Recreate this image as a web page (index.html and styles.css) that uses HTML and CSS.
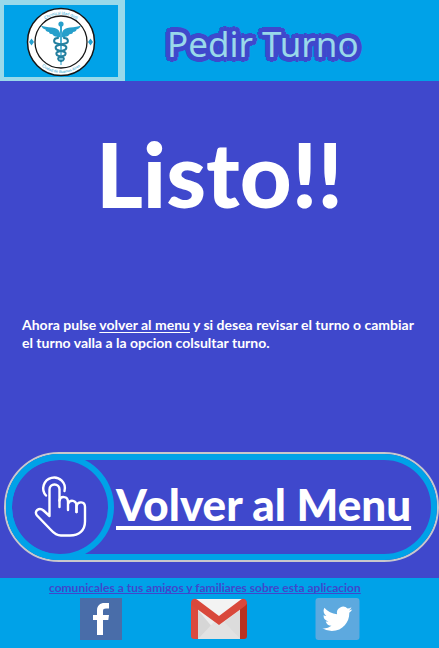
FILE: index.html
```html
<!DOCTYPE html>
<html lang="es">
<head>
<meta charset="utf-8">
<meta name="viewport" content="width=device-width, initial-scale=1">
<title>Pedir Turno</title>
<link rel="stylesheet" href="styles.css">
</head>
<body>
<header class="top">
  <div class="logo">
    <svg class="seal" viewBox="0 0 70 70" aria-hidden="true">
      <defs>
        <path id="arc-top" d="M7.500 35a27.500 27.500 0 0 1 55 0"/>
        <path id="arc-bottom" d="M4 35a31 31 0 0 0 62 0"/>
      </defs>
      <circle cx="35" cy="35" r="33.500" fill="#fff" stroke="#161616" stroke-width="1.500"/>
      <circle cx="35" cy="35" r="26" fill="#fff" stroke="#161616" stroke-width="1.300"/>
      <text class="seal-text"><textPath href="#arc-top" startOffset="50%">Chemical (dad dad)</textPath></text>
      <text class="seal-text"><textPath href="#arc-bottom" startOffset="50%">Ciudad de Buenos Aires</textPath></text>
      <path d="M5.500 31.500 8 35l-2.500 3.500L3 35zM64.500 31.500 67 35l-2.500 3.500L62 35z" fill="#24a0d0"/>
      <g fill="#269fcb">
        <path d="M34 26c-1-4-4-5-8-5.500-5-.4-8-.9-11-2 1 2.500 2.500 3.500 4.500 4 0 1.500 1.500 2.300 3.500 2.500 0 1.500 1.500 2.200 3.500 2.200.5 1.600 2.500 2.300 4 2.300.5 1.500 2 1.500 3.500.5zM36 26c1-4 4-5 8-5.500 5-.4 8-.9 11-2-1 2.500-2.500 3.500-4.500 4 0 1.500-1.500 2.300-3.500 2.500 0 1.500-1.500 2.200-3.500 2.200-.5 1.600-2.500 2.300-4 2.300-.5 1.500-2 1.500-3.500.5z"/>
        <circle cx="35" cy="17" r="2.600"/>
        <path d="M34 18h2l-.5 40h-1z"/>
      </g>
      <g fill="none" stroke="#237f9f" stroke-width="2" stroke-linecap="round">
        <path d="M32 31c-5 0-5 5-1 5.500l6 1.500c5 1 4 5 0 5.500l-4 1c-4 1-3 4 0 4.500l3 1c3 1 2 3.500-1 4"/>
        <path d="M38 31c5 0 5 5 1 5.500L33 38c-5 1-4 5 0 5.500l4 1c4 1 3 4 0 4.500l-3 1c-3 1-2 3.500 1 4"/>
      </g>
    </svg>
  </div>
  <h1 class="title">Pedir Turno</h1>
</header>

<main class="content">
  <h2 class="done">Listo!!</h2>
  <p class="note">Ahora pulse <a href="#menu">volver al menu</a> y si desea revisar el turno o cambiar el turno valla a la opcion colsultar turno.</p>
  <a class="back" id="menu" href="#menu">
    <span class="back-inner">
      <span class="back-icon">
        <svg class="hand" viewBox="-1 -1 54 64" aria-hidden="true">
          <g fill="none" stroke="#fff" stroke-width="2.400" stroke-linecap="round" stroke-linejoin="round">
            <path d="M12 19.500A10.800 10.800 0 1 1 30.500 15"/>
            <path d="M25.500 31V13.500a5 5 0 0 0-10 0V40l-6-5.500c-4.500-4-10 1-6.500 5L17 54c3.500 4 6 5.500 10 5.500h9c9 0 15-5 15-14V31c0-6-7.500-6-8.500-1v6"/>
            <path d="M25.500 24.500c1-5 8.500-4.500 8.500 1.500v8M34 28c2-5 8.500-4 8.500 2V36"/>
          </g>
        </svg>
      </span>
      <span class="back-label">Volver al Menu</span>
    </span>
  </a>
</main>

<footer class="share">
  <a class="share-text" href="#compartir">comunicales a tus amigos y familiares sobre esta aplicacion</a>
  <nav class="networks" id="compartir" aria-label="Compartir">
    <a href="#facebook" aria-label="Facebook">
      <svg class="facebook" viewBox="0 0 42 42"><path fill="#496da9" d="M0 0h42v42H0z"/><path fill="#fff" d="M17 37V22h-4v-5h4v-4.500C17 7.500 20 5 24.500 5H29v5.500h-3c-2 0-3 .7-3 2.500v4h6l-.7 5H23v15z"/></svg>
    </a>
    <a href="#gmail" aria-label="Gmail">
      <svg class="gmail" viewBox="0 0 56 42">
        <path fill="#ececec" d="M4 1h48v40H4z"/>
        <path fill="#d6d6d6" d="M7 12 22 30 11 41H7z"/>
        <path fill="#e2e2e2" d="M7 41 23 24l5 3 5-3 16 17z"/>
        <path fill="#dcdcdc" d="m33 24 16-12v29z"/>
        <path fill="#f3f3f3" d="M4 1h48L28 20z"/>
        <path fill="#db4a3e" d="M0 5v33c0 2 1 3 3 3h4V11z"/>
        <path fill="#b93221" d="M56 5v33c0 2-1 3-3 3h-4V11z"/>
        <path fill="#d9483b" d="M0 5c0-4 4-5 6-3.500L28 18 50 1.500C52 0 56 1 56 5c0 1-1 2-2 3L28 27 2 8C1 7 0 6 0 5z"/>
      </svg>
    </a>
    <a href="#twitter" aria-label="Twitter">
      <svg class="twitter" viewBox="0 0 45 43"><rect width="45" height="43" rx="3" fill="#5da9df"/><path fill="#fff" transform="translate(7 6) scale(1.280)" d="M23.950 4.570a10 10 0 0 1-2.820.77 4.960 4.960 0 0 0 2.160-2.720c-.95.560-2 .96-3.130 1.190a4.920 4.920 0 0 0-8.380 4.480A13.930 13.930 0 0 1 1.640 3.160a4.920 4.920 0 0 0 1.520 6.570 4.900 4.900 0 0 1-2.230-.61v.06a4.920 4.920 0 0 0 3.950 4.830 5 5 0 0 1-2.210.08 4.940 4.940 0 0 0 4.600 3.420A9.870 9.870 0 0 1 0 19.540a13.990 13.990 0 0 0 7.550 2.210c9.050 0 14-7.500 14-13.980 0-.21 0-.42-.02-.63a9.940 9.940 0 0 0 2.420-2.570z"/></svg>
    </a>
  </nav>
</footer>
</body>
</html>
```
FILE: styles.css
```css
* {
  box-sizing: border-box;
}

body {
  margin: 0;
  min-height: 100vh;
  display: flex;
  flex-direction: column;
  background: #3f48cc;
  color: #fff;
  font-family: Lato, "Liberation Sans", sans-serif;
  font-weight: 700;
}

h1,
h2,
p {
  margin: 0;
}

a {
  color: inherit;
}

svg {
  display: block;
}

.top {
  display: flex;
  align-items: stretch;
  background: #00a2e8;
}

.logo {
  flex: none;
  width: 125px;
  border: solid #99d9ea;
  border-width: 5px 3px 4px 4px;
  display: flex;
  justify-content: center;
  background: #00a2e8;
  padding-right: 4px;
  box-shadow: inset -4px 0 #99d9ea;
}

.seal {
  width: 70px;
  height: 70px;
  margin: 2px 0 0;
}

.seal-text {
  font-size: 4px;
  font-weight: 400;
  fill: #24a0d0;
  text-anchor: middle;
}

.title {
  flex: 1;
  padding: 6px 0 0 42px;
  font-family: "Noto Sans", sans-serif;
  font-size: 35px;
  font-weight: 400;
  line-height: 75px;
  white-space: nowrap;
  color: #99d9ea;
  text-shadow:
    5px 0 #3f48cc, -5px 0 #3f48cc, 0 5px #3f48cc, 0 -5px #3f48cc,
    3px 3px #3f48cc, -3px 3px #3f48cc, 3px -3px #3f48cc, -3px -3px #3f48cc,
    4px 3px #3f48cc, -4px 3px #3f48cc, 4px -3px #3f48cc, -4px -3px #3f48cc,
    3px 4px #3f48cc, -3px 4px #3f48cc, 3px -4px #3f48cc, -3px -4px #3f48cc,
    2px 0 #3f48cc, -2px 0 #3f48cc, 0 2px #3f48cc, 0 -2px #3f48cc;
}

.content {
  flex: 1;
  display: flex;
  flex-direction: column;
}

.done {
  padding-top: 40px;
  font-size: 90px;
  font-weight: 900;
  line-height: 104px;
  text-align: center;
}

.note {
  margin: 91px 20px 0 22px;
  font-size: 14px;
  line-height: 18px;
}

.note a {
  text-underline-offset: 2px;
}

.back {
  margin: auto 0 16px 4px;
  border: 2px solid #c8c8cc;
  border-radius: 55px;
  text-decoration: none;
}

.back-inner {
  display: flex;
  align-items: center;
  border: 6px solid #00a2e8;
  border-radius: 53px;
}

.back-icon {
  flex: none;
  width: 108px;
  height: 106px;
  margin: -6px 0 -6px -6px;
  border: 6px solid #00a2e8;
  border-radius: 50%;
  display: flex;
  align-items: center;
  justify-content: center;
}

.hand {
  width: 54px;
  height: 64px;
}

.back-label {
  margin: 0 0 6px 2px;
  font-size: 44px;
  font-weight: 900;
  line-height: 50px;
  white-space: nowrap;
  text-decoration: underline;
  text-decoration-thickness: 4px;
  text-decoration-skip-ink: none;
  text-underline-offset: 5px;
}

.share {
  padding: 2px 0 8px;
  background: #00a2e8;
}

.share-text {
  display: block;
  margin: 0 0 2px 49px;
  font-size: 12px;
  line-height: 16px;
  color: #3f48cc;
  text-decoration-skip-ink: none;
}

.networks {
  display: flex;
  justify-content: space-between;
  align-items: center;
  padding: 0 79px 0 80px;
}

.facebook {
  width: 42px;
  height: 42px;
}

.gmail {
  width: 56px;
  height: 42px;
}

.twitter {
  width: 45px;
  height: 42px;
}
```
